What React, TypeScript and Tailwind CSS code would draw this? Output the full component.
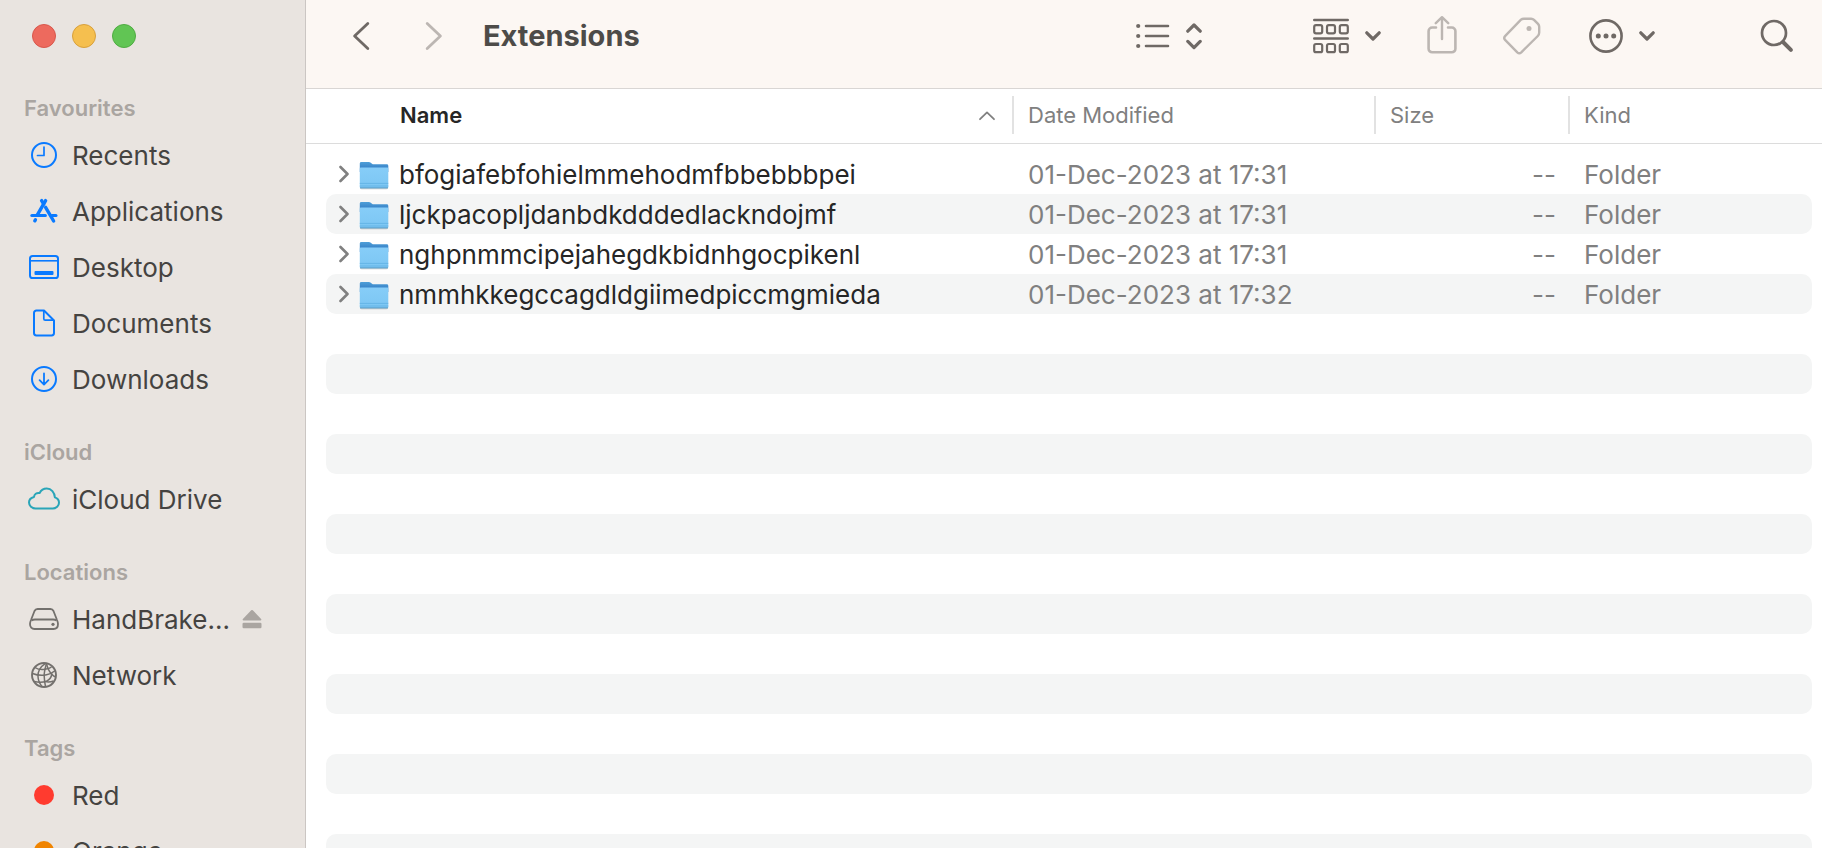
import type { ReactNode } from 'react'

interface SidebarItem {
  label: string
  icon: ReactNode
  ejectable?: boolean
}

interface SidebarSection {
  title: string
  items: SidebarItem[]
}

interface FileRow {
  name: string
  modified: string
  size: string
  kind: string
}

const RecentsIcon = () => (
  <svg width="32" height="28" viewBox="0 0 32 28" fill="none" stroke="#0a7aff" strokeWidth="2" strokeLinecap="round" strokeLinejoin="round">
    <circle cx="16" cy="14" r="12" />
    <path d="M16 6v8.500H9.500" strokeWidth="1.700" />
  </svg>
)

const ApplicationsIcon = () => (
  <svg width="32" height="28" viewBox="0 0 32 28" fill="none" stroke="#0a7aff" strokeWidth="3.400" strokeLinecap="round">
    <path d="M17.600 3.600 9.200 18.200" />
    <path d="M13.600 3.600l2 3.400" />
    <path d="M17.600 10.400l8 13.600" />
    <path d="M7.400 22.800l-.6 1" />
    <path d="M3.800 18.400h13.600" strokeWidth="3" />
    <path d="M24 18.400h4" strokeWidth="3" />
  </svg>
)

const DesktopIcon = () => (
  <svg width="32" height="28" viewBox="0 0 32 28" fill="none" stroke="#0a7aff" strokeWidth="2">
    <rect x="2" y="3" width="28" height="22" rx="2.600" />
    <path d="M2 7.800h28" strokeWidth="1.600" />
    <rect x="6.500" y="18" width="19" height="4" rx="1" fill="#0a7aff" stroke="none" />
  </svg>
)

const DocumentsIcon = () => (
  <svg width="32" height="28" viewBox="0 0 32 28" fill="none" stroke="#0a7aff" strokeWidth="2" strokeLinejoin="round">
    <path d="M16 1.500H8.400A2.400 2.400 0 0 0 6 3.900v20.200a2.400 2.400 0 0 0 2.400 2.400h15.200a2.400 2.400 0 0 0 2.400-2.400V11.500z" />
    <path d="M15.800 2v7.800a1.400 1.400 0 0 0 1.400 1.400H25.500" strokeWidth="1.700" />
  </svg>
)

const DownloadsIcon = () => (
  <svg width="32" height="28" viewBox="0 0 32 28" fill="none" stroke="#0a7aff" strokeWidth="2" strokeLinecap="round" strokeLinejoin="round">
    <circle cx="16" cy="14" r="12" />
    <path d="M16 8.400v11M11.600 15.200l4.400 4.400 4.400-4.400" strokeWidth="1.800" />
  </svg>
)

const CloudIcon = () => (
  <svg width="32" height="28" viewBox="0 0 32 28" fill="none" stroke="#2aa5b8" strokeWidth="2" strokeLinejoin="round">
    <path d="M7.600 23.500h17.200c3.400 0 6.200-2.500 6.200-5.700 0-2.700-1.800-4.700-4.100-5.400C26.600 7.400 23.200 3.500 18.800 3.500c-3.200 0-5.900 1.900-7.200 4.500-3-.6-5.400 1.300-5.600 4C3 12.700 1 15 1 17.600c0 3.300 3 5.900 6.600 5.900z" />
  </svg>
)

const DriveIcon = () => (
  <svg width="32" height="28" viewBox="0 0 32 28" fill="none" stroke="#73706d" strokeWidth="1.800" strokeLinejoin="round">
    <path d="M9.600 4h12.800c1.500 0 2.500.7 3.100 2L29 15c.6 1.400 1 2.600 1 4 0 3-1.700 5-4.500 5h-19C3.700 24 2 22 2 19c0-1.400.4-2.600 1-4l3.500-9c.6-1.300 1.600-2 3.100-2z" />
    <path d="M3.500 15.500c1-.7 2-1 3.500-1h18c1.500 0 2.500.3 3.500 1" />
    <circle cx="25" cy="19.300" r="1.600" fill="#73706d" stroke="none" />
  </svg>
)

const NetworkIcon = () => (
  <svg width="32" height="28" viewBox="0 0 32 28" fill="none" stroke="#73706d" strokeWidth="1.500">
    <circle cx="16" cy="14" r="12" strokeWidth="1.900" />
    <path d="M18.500 2.500C17 8 16 11 16.200 15c.1 4 .6 7 1.300 10.700" />
    <path d="M17.500 2.400C12 6 9.800 11 10 15.500c.1 4 1.500 7 4 10" />
    <path d="M18.500 2.400c1 5 2.500 8 5 10.600 1.300 1.400 2.800 2.500 4 3" />
    <path d="M7 6.500c3 2 6.500 2.500 10 1.800 2.500-.4 5-1 6.500-2.300" />
    <path d="M4.500 12.500c5 2 9.500 2.300 14 1.300 3.500-.8 6.500-2.200 8.500-4" />
    <path d="M6 20.500c4.500 1 9 1 12.500-.4 2.800-1.200 4.800-3.500 5.500-7.600" />
    <path d="M17 20.600c3 .6 6 .4 8.500-.6" />
  </svg>
)

const TagDot = ({ color }: { color: string }) => (
  <svg width="32" height="28" viewBox="0 0 32 28">
    <circle cx="16" cy="14" r="10" fill={color} />
  </svg>
)

const EjectIcon = () => (
  <svg width="20" height="20" viewBox="0 0 20 20" fill="#aaa5a1">
    <path d="M9.200 1.300.9 9.900c-.6.700-.2 1.600.7 1.600h16.800c.9 0 1.300-.9.700-1.600L10.800 1.300a1.100 1.100 0 0 0-1.600 0z" />
    <rect x=".5" y="13.800" width="19" height="5.400" rx="1.200" />
  </svg>
)

const SmallChevron = () => (
  <svg width="16" height="12" viewBox="0 0 16 12" fill="none" stroke="#6f6965" strokeWidth="3.200" strokeLinecap="round" strokeLinejoin="round">
    <path d="M1.800 2.800 8 9l6.200-6.200" />
  </svg>
)

const FolderIcon = () => (
  <svg width="30" height="30" viewBox="0 0 30 30" className="shrink-0">
    <defs>
      <linearGradient id="folder-back" x1="0" y1="0" x2="0" y2="1">
        <stop offset="0" stopColor="#4e9fd8" />
        <stop offset="1" stopColor="#2b72bf" />
      </linearGradient>
      <linearGradient id="folder-front" x1="0" y1="0" x2="0" y2="1">
        <stop offset="0" stopColor="#86cdf8" />
        <stop offset="1" stopColor="#7cc6f3" />
      </linearGradient>
    </defs>
    <rect x="1" y="9" width="28" height="20.300" rx="1.600" fill="#000" opacity=".22" />
    <path d="M.8 3.600c0-1 .5-1.600 1.500-1.600h7.500c.8 0 1.400.3 2 .8l1.200 1c.5.4 1 .5 1.700.5h13c1 0 1.600.6 1.600 1.600V12H.8z" fill="url(#folder-back)" />
    <path d="M.8 8.700c0-.8.500-1.300 1.300-1.300h25.900c.8 0 1.300.5 1.300 1.300v18.200c0 .9-.5 1.400-1.400 1.400H2.200c-.9 0-1.400-.5-1.400-1.400z" fill="url(#folder-front)" />
    <path d="M.8 23.400h28.500M.8 26h28.500" stroke="#5fb0e2" strokeWidth=".8" />
    <path d="M1 27.800h28" stroke="#5a9fcb" strokeWidth=".9" />
  </svg>
)

const sections: SidebarSection[] = [
  {
    title: 'Favourites',
    items: [
      { label: 'Recents', icon: <RecentsIcon /> },
      { label: 'Applications', icon: <ApplicationsIcon /> },
      { label: 'Desktop', icon: <DesktopIcon /> },
      { label: 'Documents', icon: <DocumentsIcon /> },
      { label: 'Downloads', icon: <DownloadsIcon /> },
    ],
  },
  {
    title: 'iCloud',
    items: [{ label: 'iCloud Drive', icon: <CloudIcon /> }],
  },
  {
    title: 'Locations',
    items: [
      { label: 'HandBrake...', icon: <DriveIcon />, ejectable: true },
      { label: 'Network', icon: <NetworkIcon /> },
    ],
  },
  {
    title: 'Tags',
    items: [
      { label: 'Red', icon: <TagDot color="#ff3b2f" /> },
      { label: 'Orange', icon: <TagDot color="#f08400" /> },
    ],
  },
]

const files: FileRow[] = [
  { name: 'bfogiafebfohielmmehodmfbbebbbpei', modified: '01-Dec-2023 at 17:31', size: '--', kind: 'Folder' },
  { name: 'ljckpacopljdanbdkdddedlackndojmf', modified: '01-Dec-2023 at 17:31', size: '--', kind: 'Folder' },
  { name: 'nghpnmmcipejahegdkbidnhgocpikenl', modified: '01-Dec-2023 at 17:31', size: '--', kind: 'Folder' },
  { name: 'nmmhkkegccagdldgiimedpiccmgmieda', modified: '01-Dec-2023 at 17:32', size: '--', kind: 'Folder' },
]

const emptyRows = Array.from({ length: 14 }, (_, i) => i)

function Sidebar() {
  return (
    <aside className="w-[306px] shrink-0 overflow-hidden bg-[#e9e4e0] border-r border-[#cbc6c3]">
      {/* Window controls */}
      <div className="flex gap-4 h-[89px] pl-8 pt-6">
        <button aria-label="Close" className="size-6 rounded-full bg-[#ed6a5e] border border-[#d8574c]" />
        <button aria-label="Minimise" className="size-6 rounded-full bg-[#f5bf4f] border border-[#d8a03c]" />
        <button aria-label="Zoom" className="size-6 rounded-full bg-[#61c554] border border-[#4fac42]" />
      </div>

      <nav className="flex flex-col gap-[26px]">
        {sections.map((section) => (
          <section key={section.title}>
            <h2 className="h-[38px] pl-6 flex items-center text-[22px] font-semibold text-[#aaa5a1]">{section.title}</h2>
            <ul>
              {section.items.map((item) => (
                <li key={item.label} className="flex items-center h-14 pl-7 gap-3">
                  <a href="#" className="flex items-center gap-3 text-[26px] text-[#454341]">
                    {item.icon}
                    {item.label}
                  </a>
                  {item.ejectable && (
                    <button aria-label="Eject">
                      <EjectIcon />
                    </button>
                  )}
                </li>
              ))}
            </ul>
          </section>
        ))}
      </nav>
    </aside>
  )
}

function Toolbar() {
  return (
    <header className="flex items-center justify-between h-[89px] shrink-0 pl-[46px] pr-7 pb-[17px] bg-[#fcf7f3] border-b border-[#d9d6d4]">
      <div className="flex items-center">
        <button aria-label="Back">
          <svg width="18" height="30" viewBox="0 0 18 30" fill="none" stroke="#6f6965" strokeWidth="2.800" strokeLinecap="round" strokeLinejoin="round">
            <path d="M15.800 2.400 2.600 15l13.200 12.600" />
          </svg>
        </button>
        <button aria-label="Forward" className="ml-[55px]">
          <svg width="18" height="30" viewBox="0 0 18 30" fill="none" stroke="#bcb6b2" strokeWidth="2.800" strokeLinecap="round" strokeLinejoin="round">
            <path d="M2.200 2.400 15.400 15 2.200 27.600" />
          </svg>
        </button>
        <h1 className="ml-10 text-[29px] font-bold text-[#4d4b48]">Extensions</h1>
      </div>

      <div className="flex items-center gap-[105px]">
        <button aria-label="View as list" className="flex items-center gap-4 w-[72px]">
          <svg width="34" height="26" viewBox="0 0 34 26" stroke="#6f6965" fill="#6f6965" strokeWidth="2.600" strokeLinecap="round">
            <g stroke="none">
              <circle cx="2.200" cy="3" r="2.100" />
              <circle cx="2.200" cy="13" r="2.100" />
              <circle cx="2.200" cy="23" r="2.100" />
            </g>
            <path d="M10 3h22M10 13h22M10 23h22" />
          </svg>
          <svg width="16" height="28" viewBox="0 0 16 28" fill="none" stroke="#6f6965" strokeWidth="3.200" strokeLinecap="round" strokeLinejoin="round">
            <path d="M1.800 9.200 8 3l6.200 6.200M1.800 19.400 8 25.600l6.200-6.200" />
          </svg>
        </button>

        <div className="flex items-center gap-[46px]">
          <button aria-label="Group" className="flex items-center gap-4">
            <svg width="36" height="36" viewBox="0 0 36 36" fill="none" stroke="#6f6965" strokeWidth="2.200" strokeLinecap="round">
              <path d="M1.300 2h33.400M1.300 20.500h33.400" strokeWidth="2.600" />
              <rect x="1.200" y="7.200" width="8" height="8.200" rx="1.800" />
              <rect x="14" y="7.200" width="8" height="8.200" rx="1.800" />
              <rect x="26.800" y="7.200" width="8" height="8.200" rx="1.800" />
              <rect x="1.200" y="26" width="8" height="8.200" rx="1.800" />
              <rect x="14" y="26" width="8" height="8.200" rx="1.800" />
              <rect x="26.800" y="26" width="8" height="8.200" rx="1.800" />
            </svg>
            <SmallChevron />
          </button>
          <button aria-label="Share">
            <svg width="30" height="40" viewBox="0 0 30 40" fill="none" stroke="#bcb6b2" strokeWidth="2.600" strokeLinecap="round" strokeLinejoin="round">
              <path d="M9 11.500H5.200a3.600 3.600 0 0 0-3.600 3.600v17.600a3.600 3.600 0 0 0 3.600 3.600h19.600a3.600 3.600 0 0 0 3.600-3.600V15.100a3.600 3.600 0 0 0-3.600-3.600H21" />
              <path d="M15 23V1.400M8.800 7.200 15 1.200l6.200 6" strokeWidth="2.400" />
            </svg>
          </button>
          <button aria-label="Edit tags">
            <svg width="40" height="38" viewBox="0 0 40 38" fill="none" stroke="#bcb6b2" strokeWidth="2.400" strokeLinejoin="round">
              <path d="M18 2.700 2.300 18.800c-1.400 1.500-1.400 3 0 4.400l12 12.100c1.400 1.300 2.600 1.300 4 0l16.500-16.300c1-1 1.400-2 1.400-3.400V9.800c0-1.200-.4-2-1.200-2.900l-4-4c-.8-.8-1.600-1.200-2.800-1.200h-7.300c-1.200 0-2 .2-2.900 1z" />
              <circle cx="26" cy="11.500" r="2.500" fill="#bcb6b2" stroke="none" />
            </svg>
          </button>
          <button aria-label="More actions" className="flex items-center gap-4">
            <svg width="34" height="34" viewBox="0 0 34 34" fill="#6f6965">
              <circle cx="17" cy="17" r="15.600" fill="none" stroke="#6f6965" strokeWidth="2.600" />
              <circle cx="9.300" cy="17" r="2.500" />
              <circle cx="17" cy="17" r="2.500" />
              <circle cx="24.700" cy="17" r="2.500" />
            </svg>
            <SmallChevron />
          </button>
        </div>

        <button aria-label="Search">
          <svg width="34" height="34" viewBox="0 0 34 34" fill="none" stroke="#6f6965" strokeLinecap="round">
            <circle cx="14" cy="14" r="12" strokeWidth="2.700" />
            <path d="m23.500 23.500 7.400 7.400" strokeWidth="4" />
          </svg>
        </button>
      </div>
    </header>
  )
}

function FileList() {
  return (
    <table className="block text-left">
      <thead className="block border-b border-[#dcdcdc]">
        <tr className="grid grid-cols-[minmax(0,1fr)_362px_194px_244px] pl-5 pr-[10px] pt-[7px] pb-[9px] text-[22px] text-[#808080]">
          <th className="flex items-center justify-between h-[38px] pl-[74px] pr-4 font-semibold text-[#262626]">
            Name
            <svg width="18" height="12" viewBox="0 0 18 12" fill="none" stroke="#808080" strokeWidth="1.800" strokeLinecap="round" strokeLinejoin="round">
              <path d="M2 10.200 9 3.400l7 6.800" />
            </svg>
          </th>
          <th className="flex items-center h-[38px] pl-[14px] border-l-2 border-[#e2e2e2] font-normal">Date Modified</th>
          <th className="flex items-center h-[38px] pl-[14px] border-l-2 border-[#e2e2e2] font-normal">Size</th>
          <th className="flex items-center h-[38px] pl-[14px] border-l-2 border-[#e2e2e2] font-normal">Kind</th>
        </tr>
      </thead>
      <tbody className="block pl-5 pr-[10px] pt-[10px] text-[26px] text-[#808080]">
        {files.map((file) => (
          <tr
            key={file.name}
            className="grid grid-cols-[minmax(0,1fr)_362px_194px_244px] h-10 rounded-[10px] leading-[42px] even:bg-[#f4f5f5]"
          >
            <td className="flex items-center gap-[10px] pl-[13px] text-[#262626]">
              <button aria-label={`Expand ${file.name}`}>
                <svg width="10" height="20" viewBox="0 0 10 20" fill="none" stroke="#808080" strokeWidth="2.600" strokeLinecap="round" strokeLinejoin="round">
                  <path d="M1.500 2 8.500 9l-7 7" />
                </svg>
              </button>
              <FolderIcon />
              <span>{file.name}</span>
            </td>
            <td className="pl-4">{file.modified}</td>
            <td className="pr-3 text-right">{file.size}</td>
            <td className="pl-4">{file.kind}</td>
          </tr>
        ))}
        {emptyRows.map((i) => (
          <tr key={i} className="block h-10 rounded-[10px] even:bg-[#f4f5f5]" />
        ))}
      </tbody>
    </table>
  )
}

export default function App() {
  return (
    <div className="flex h-screen overflow-hidden bg-white font-['Inter',sans-serif]">
      <Sidebar />
      <main className="flex-1 min-w-0 flex flex-col">
        <Toolbar />
        <FileList />
      </main>
    </div>
  )
}
